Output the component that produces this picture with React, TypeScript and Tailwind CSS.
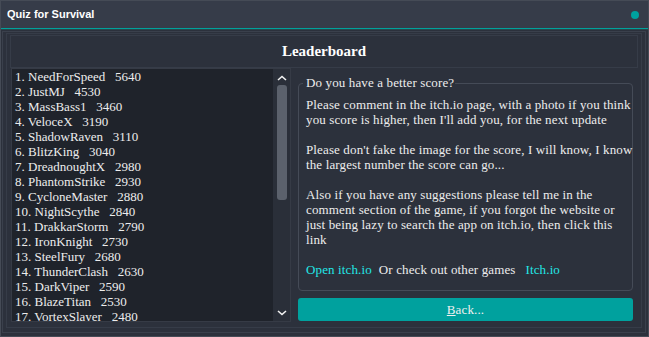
import React from "react";

const SCORES: [string, number][] = [
  ["NeedForSpeed", 5640],
  ["JustMJ", 4530],
  ["MassBass1", 3460],
  ["VeloceX", 3190],
  ["ShadowRaven", 3110],
  ["BlitzKing", 3040],
  ["DreadnoughtX", 2980],
  ["PhantomStrike", 2930],
  ["CycloneMaster", 2880],
  ["NightScythe", 2840],
  ["DrakkarStorm", 2790],
  ["IronKnight", 2730],
  ["SteelFury", 2680],
  ["ThunderClash", 2630],
  ["DarkViper", 2590],
  ["BlazeTitan", 2530],
  ["VortexSlayer", 2480],
];

// lines broken where the original dialog wraps them
const PARAGRAPHS: string[][] = [
  [
    "Please comment in the itch.io page, with a photo if you think",
    "you score is higher, then I'll add you, for the next update",
  ],
  [
    "Please don't fake the image for the score, I will know, I know",
    "the largest number the score can go...",
  ],
  [
    "Also if you have any suggestions please tell me in the",
    "comment section of the game, if you forgot the website or",
    "just being lazy to search the app on itch.io, then click this",
    "link",
  ],
];

function Chevron({ up }: { up?: boolean }) {
  return (
    <svg width="10" height="6" viewBox="0 0 10 6" className="block">
      <polyline
        points={up ? "1,5 5,1.5 9,5" : "1,1 5,4.5 9,1"}
        fill="none"
        stroke="#f2f2f2"
        strokeWidth="1.6"
      />
    </svg>
  );
}

export default function App() {
  return (
    <div className="flex h-[337px] w-[649px] flex-col overflow-hidden border border-[#454b56] bg-[#2c313c] font-['Liberation_Serif',serif] text-[13px] text-[#ededed]">
      {/* title bar */}
      <div className="flex h-[27px] shrink-0 items-center justify-between bg-[#363c49] pl-[6px] pr-[9px]">
        <span className="font-['Liberation_Sans',sans-serif] text-[11px] font-bold text-white">Quiz for Survival</span>
        <span className="h-[8px] w-[8px] rounded-full bg-[#00a19e]" />
      </div>
      <div className="h-[1px] shrink-0 bg-[#00a19b]" />
      <div className="h-[1px] shrink-0 bg-[#27474c]" />

      {/* frames */}
      <div className="flex flex-1 flex-col pb-[3px] pl-[1px] pr-[2px] pt-[1px]">
        <div className="flex flex-1 flex-col border border-[#3a404c] pb-[4px] pl-[3px] pr-[3px] pt-[1px]">
          <div className="flex flex-1 flex-col border border-[#363c48] pb-[4px] pl-[3px] pr-[3px] pt-[1px]">
            <div className="flex h-[33px] shrink-0 items-center justify-center border border-[#363c48] text-[15px] font-bold text-white">
              Leaderboard
            </div>

            <div className="flex flex-1 gap-[7px] pl-[1px] pr-[5px]">
              {/* score list */}
              <div className="flex h-[254px] w-[280px] border border-[#363b46] bg-[#1f232b]">
                <div className="flex-1 overflow-hidden pl-[3px]">
                  {SCORES.map(([name, score], i) => (
                    <div key={name} className="whitespace-pre leading-[15px]">
                      {`${i + 1}. ${name}   ${score}`}
                    </div>
                  ))}
                </div>
                <div className="flex w-[17px] flex-col items-center bg-[#2a2f39]">
                  <div className="flex h-[16px] items-center justify-center pt-[1px]">
                    <Chevron up />
                  </div>
                  <div className="h-[115px] w-[10px] rounded-[3px] bg-[#5b616c]" />
                  <div className="flex-1" />
                  <div className="flex h-[17px] items-center justify-center">
                    <Chevron />
                  </div>
                </div>
              </div>

              {/* info column */}
              <div className="flex min-w-0 flex-1 flex-col tracking-[0.13px]">
                <div className="relative mt-[15px] h-[208px] overflow-visible rounded-[4px] border border-[#454b57] pl-[7px] pt-[13px]">
                  <span className="absolute left-[4px] top-[-9px] bg-[#2c313c] pl-[3px] pr-[1px] leading-[15px]">
                    Do you have a better score?
                  </span>
                  <div className="leading-[15px]">
                    {PARAGRAPHS.map((lines, i) => (
                      <p key={i} className="mb-[15px]">
                        {lines.map((l) => (
                          <span key={l} className="block whitespace-nowrap">
                            {l}
                          </span>
                        ))}
                      </p>
                    ))}
                    <div className="flex whitespace-nowrap">
                      <span className="text-[#22e6e6]">Open itch.io</span>
                      <span className="ml-[7px]">Or check out other games</span>
                      <span className="ml-[10px] text-[#22e6e6]">Itch.io</span>
                    </div>
                  </div>
                </div>
                <button className="mt-[7px] flex h-[23px] items-center justify-center rounded-[3px] bg-[#00a19e] text-[13px] text-[#f0f0f0]">
                  <span>
                    <span className="underline">B</span>ack...
                  </span>
                </button>
              </div>
            </div>
          </div>
        </div>
      </div>
    </div>
  );
}
